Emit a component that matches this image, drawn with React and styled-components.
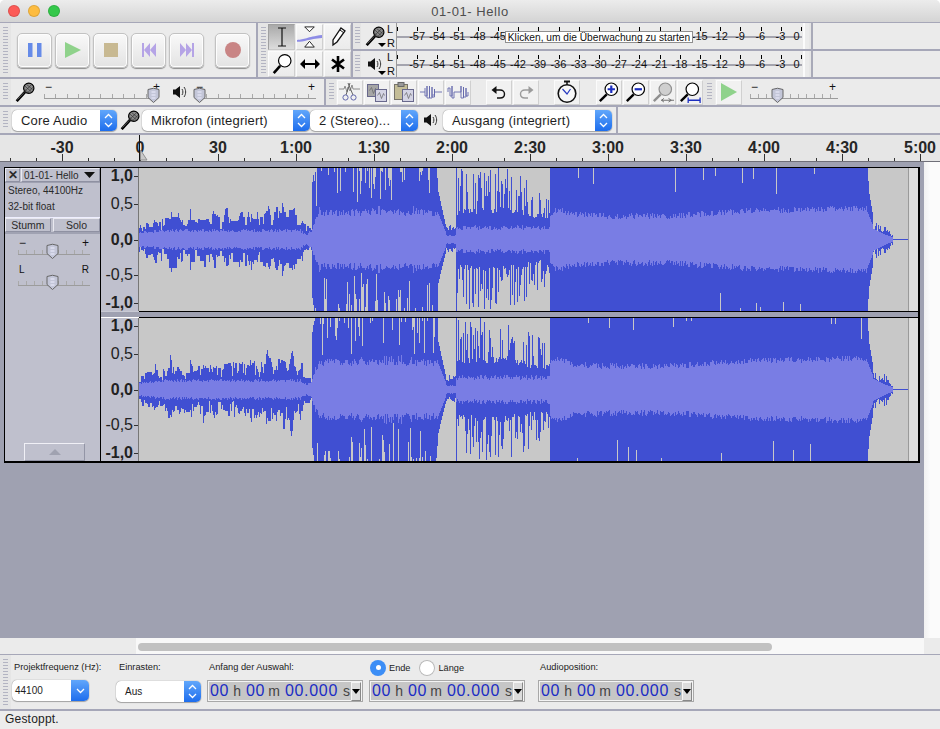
import React from 'react';
import styled, { createGlobalStyle } from 'styled-components';

const GlobalStyle = createGlobalStyle`
  html, body { margin: 0; padding: 0; background: #fff; }
  * { box-sizing: border-box; }
`;

const LINE = '#a6a7b8';
const SANS = '"Liberation Sans", Arial, sans-serif';

const Window = styled.div`
  width: 940px;
  height: 729px;
  display: flex;
  flex-direction: column;
  overflow: hidden;
  background: #ececec;
  font-family: ${SANS};
  color: #222;
  border-radius: 5px 5px 0 0;
`;

const TitleBar = styled.div`
  height: 23px;
  flex: none;
  display: flex;
  align-items: center;
  padding-left: 8px;
  gap: 8px;
  position: relative;
  background: linear-gradient(#ececec, #d4d4d4);
  border-bottom: 1px solid ${LINE};
`;

const Light = styled.span`
  width: 12px;
  height: 12px;
  border-radius: 50%;
  background: ${p => p.$color};
  box-shadow: inset 0 0 0 1px rgba(0, 0, 0, 0.12);
`;

const Title = styled.div`
  position: absolute;
  left: 0;
  right: 0;
  text-align: center;
  font-size: 13px;
  letter-spacing: 0.55px;
  color: #4e4e4e;
`;

const Row = styled.div`
  height: ${p => p.$h}px;
  flex: none;
  display: flex;
  background: #ebebeb;
  border-bottom: 2px solid ${LINE};
`;

const Bar = styled.div`
  width: ${p => p.$w}px;
  flex: none;
  display: flex;
  align-items: ${p => p.$align || 'center'};
  border-right: ${p => (p.$end ? `2px solid ${LINE}` : '0')};
`;

const GripStrip = styled.div`
  width: ${p => p.$w || 11}px;
  flex: none;
  align-self: stretch;
  display: flex;
  justify-content: center;
  align-items: center;
  background: #e5e5e5;
`;

const Grip = styled.div`
  width: 5px;
  height: calc(100% - 8px);
  background: repeating-linear-gradient(180deg, #b3b4c2 0 1px, transparent 1px 3px);
`;

const Transport = styled.button`
  width: 35px;
  height: 35px;
  padding: 0;
  margin-left: ${p => p.$gap}px;
  display: flex;
  align-items: center;
  justify-content: center;
  border: 1px solid #c2c2c2;
  border-radius: 5px;
  background: linear-gradient(#f9f9f9, #e3e3e3);
  box-shadow: 0 1px 1px #8d8d8d, inset 0 0 0 1px #fdfdfd;
`;

const ToolGrid = styled.div`
  display: grid;
  grid-template-columns: repeat(3, 27px);
  grid-auto-rows: 26px;
  gap: 1px;
  margin-top: 1px;
`;

const ToolButton = styled.div`
  display: flex;
  align-items: center;
  justify-content: center;
  border: 1px solid;
  border-color: ${p => (p.$on ? '#a0a0a0 #c8c8c8 #c8c8c8 #a0a0a0' : '#fbfbfb #cfcfcf #cfcfcf #fbfbfb')};
  background: ${p => (p.$on ? 'linear-gradient(#a9a9a9, #dcdcdc)' : 'linear-gradient(#f6f6f6, #ebebeb)')};
`;

const Meters = styled.div`
  flex: 1;
  display: flex;
  flex-direction: column;
`;

const MeterRow = styled.div`
  height: ${p => p.$h}px;
  display: flex;
  border-bottom: ${p => (p.$rule ? `2px solid ${LINE}` : '0')};
`;

const MeterIcon = styled.div`
  width: 20px;
  margin-left: 4px;
  position: relative;
  display: flex;
  align-items: center;
  justify-content: center;
`;

const DownMark = styled.span`
  position: absolute;
  right: -1px;
  bottom: 2px;
  border: 4px solid transparent;
  border-top: 4px solid #000;
  border-bottom: 0;
`;

const Channels = styled.div`
  width: 8px;
  margin: -1px 0 0 2px;
  font-size: 11px;
  line-height: 14px;
  color: #111;
`;

const Scale = styled.div`
  width: 406px;
  margin-left: 1px;
  position: relative;
  border-left: 1px solid #9a9a9a;
`;

const ScaleTicks = styled.div`
  height: 4px;
  margin-top: 4px;
  background: repeating-linear-gradient(90deg, #000 0 1px, transparent 1px 20.2px);
`;

const ScaleRule = styled.div`
  position: absolute;
  left: 0;
  right: 0;
  top: ${p => p.$top}px;
  height: 2px;
  background: #a4a4ae;
`;

const ScaleLabels = styled.div`
  display: flex;
  position: relative;
  padding-left: 10px;
  margin-top: -1px;
`;

const ScaleLabel = styled.span`
  width: ${p => (p.$last ? 12 : 20.2)}px;
  flex: none;
  text-align: center;
  font-size: 11px;
  line-height: 13px;
  color: #111;
  visibility: ${p => (p.$covered ? 'hidden' : 'visible')};
`;

const MeterHint = styled.div`
  position: absolute;
  left: 108px;
  top: 8px;
  width: 188px;
  height: 12px;
  display: flex;
  align-items: center;
  justify-content: center;
  background: #fff;
  border: 1px solid #8f8f8f;
  font-size: 10.2px;
  color: #111;
  white-space: nowrap;
`;

const ScaleEnd = styled.div`
  width: 10px;
  margin-left: 1px;
  border-left: 2px solid #fbfbfb;
  border-right: 2px solid #a9aab8;
  box-shadow: inset -2px 0 0 #e6e6e6;
`;

const SliderBox = styled.div`
  width: ${p => p.$w}px;
  height: 26px;
  flex: none;
  position: relative;
  margin-left: ${p => p.$gap || 0}px;
  padding-top: 15px;
`;

const SliderTicks = styled.div`
  height: 5px;
  border-bottom: 1px solid #9c9c9c;
  background: repeating-linear-gradient(90deg, #a9a9a9 0 1px, transparent 1px ${p => p.$step || 11.3}px);
`;

const Sign = styled.span`
  position: absolute;
  top: ${p => p.$top ?? 2}px;
  ${p => (p.$right ? `right: ${p.$inset ?? 1}px;` : 'left: 1px;')}
  font-size: ${p => p.$size || 12}px;
  line-height: 12px;
  color: #111;
`;

const ThumbWrap = styled.span`
  position: absolute;
  top: 8px;
  left: ${p => p.$at}px;
  line-height: 0;
`;

const EditButton = styled.div`
  width: 26px;
  height: 25px;
  flex: none;
  margin-left: ${p => p.$gap ?? 1}px;
  display: flex;
  align-items: center;
  justify-content: center;
  border: 1px solid;
  border-color: #fbfbfb #d0d0d0 #d0d0d0 #fbfbfb;
  background: #f1f1f1;
`;

const Select = styled.div`
  width: ${p => p.$w}px;
  height: ${p => p.$h || 21}px;
  flex: none;
  display: flex;
  align-items: center;
  margin-left: ${p => p.$gap || 0}px;
  background: #fff;
  border-radius: 5px;
  box-shadow: 0 0 1px #666, 0 1px 1px #aaa;
  font-size: ${p => p.$size || 13}px;
  letter-spacing: ${p => (p.$size ? 0 : 0.2)}px;
  color: #1e1e1e;
`;

const SelectText = styled.span`
  flex: 1;
  padding-left: ${p => p.$pad || 9}px;
  white-space: nowrap;
  overflow: hidden;
`;

const Stepper = styled.span`
  width: ${p => p.$w || 17}px;
  align-self: stretch;
  flex: none;
  display: flex;
  align-items: center;
  justify-content: center;
  border-radius: 0 5px 5px 0;
  background: linear-gradient(#61a7fb, #1d6ded);
`;

const IconSlot = styled.span`
  width: ${p => p.$w}px;
  flex: none;
  margin-left: ${p => p.$gap || 0}px;
  display: flex;
  align-items: center;
  justify-content: center;
`;

const Timeline = styled.div`
  height: 27px;
  flex: none;
  position: relative;
  display: flex;
  flex-direction: column;
  background: #e6e6e6;
  border-bottom: 1px solid #6f6f78;
`;

const TimeLabels = styled.div`
  height: 26px;
  display: flex;
  padding-left: 23px;
  overflow: hidden;
`;

const TimeLabel = styled.span`
  width: 78px;
  flex: none;
  text-align: center;
  font-size: 16px;
  font-weight: 700;
  line-height: 26px;
  color: #262626;
`;

const TimeTicks = styled.div`
  position: absolute;
  left: 0;
  right: 0;
  bottom: 0;
  height: 7px;
  background-image: linear-gradient(90deg, #333 1px, transparent 1px),
    linear-gradient(90deg, #333 1px, transparent 1px);
  background-size: 78px 7px, 26px 3px;
  background-position: 62px 100%, 10px 100%;
  background-repeat: repeat-x;
`;

const Playhead = styled.span`
  position: absolute;
  left: 139px;
  top: 0;
  bottom: 0;
  width: 1px;
  background: #111;
`;

const PlayMark = styled.span`
  position: absolute;
  left: 140px;
  top: 14px;
  line-height: 0;
`;

const Main = styled.div`
  height: 476px;
  flex: none;
  display: flex;
`;

const TrackArea = styled.div`
  width: 924px;
  flex: none;
  padding: 5px 0 0 4px;
  background: #9fa1b1;
`;

const VScroll = styled.div`
  flex: 1;
  background: linear-gradient(90deg, #f1f1f1, #fbfbfb 40%);
`;

const Track = styled.div`
  width: 916px;
  height: 296px;
  display: flex;
  background: #000;
  padding: 1px 2px 2px 1px;
`;

const Control = styled.div`
  width: 95px;
  flex: none;
  display: flex;
  flex-direction: column;
  background: #bfc0cd;
  font-size: 10px;
  color: #2a2a2a;
`;

const Header = styled.div`
  height: 15px;
  display: flex;
  border-bottom: 1px solid #9fa1b1;
`;

const PanelButton = styled.div`
  display: flex;
  align-items: center;
  justify-content: ${p => p.$justify || 'center'};
  width: ${p => p.$w}px;
  margin-left: ${p => p.$gap || 0}px;
  padding: ${p => p.$pad || 0};
  flex: ${p => (p.$w ? 'none' : 1)};
  border: 1px solid;
  border-color: #e9e9f0 #8f91a2 #8f91a2 #e9e9f0;
  font-size: ${p => p.$size || 10}px;
  font-weight: ${p => p.$weight || 400};
  color: #2a2a2a;
`;

const Info = styled.div`
  height: 34px;
  padding: 0 0 0 3px;
  line-height: 16px;
  white-space: nowrap;
`;

const MuteRow = styled.div`
  height: 17px;
  display: flex;
  gap: 2px;
  border-top: 1px solid #eef;
  border-bottom: 2px solid #a0a2b2;
`;

const PanelSlider = styled.div`
  padding-left: 13px;
  margin-top: ${p => p.$top}px;
`;

const Collapse = styled.div`
  width: 61px;
  height: 18px;
  margin: auto 0 0 19px;
  display: flex;
  align-items: center;
  justify-content: center;
  border: 1px solid;
  border-color: #f0f0f6 #9395a6 #9395a6 #f0f0f6;
`;

const CollapseMark = styled.span`
  border: 6px solid transparent;
  border-bottom: 6px solid #a0a2b0;
  border-top: 0;
`;

const ChannelStack = styled.div`
  flex: 1;
  display: flex;
  flex-direction: column;
  margin-left: 1px;
`;

const Channel = styled.div`
  height: 143px;
  display: flex;
`;

const AmpRuler = styled.div`
  width: 38px;
  flex: none;
  display: grid;
  grid-template-rows: 16px 40px 32px 38px 17px;
  background: #bfc0cd;
  border-right: 1px solid #777;
`;

const AmpLabel = styled.div`
  position: relative;
  display: flex;
  align-items: center;
  justify-content: flex-end;
  padding-right: 5px;
  font-size: 16px;
  font-weight: ${p => (p.$bold ? 700 : 400)};
  color: #222;
  &::after {
    content: '';
    position: absolute;
    right: 0;
    top: 50%;
    width: 4px;
    height: 1px;
    background: #333;
  }
`;

const Divider = styled.div`
  height: 7px;
  display: flex;
`;

const DividerSide = styled.div`
  width: 38px;
  background: #9fa1b1;
  border-top: 1px solid #c9cad4;
  border-bottom: 1px solid #fff;
`;

const DividerWave = styled.div`
  flex: 1;
  background: #9fa1b1;
  border-top: 1px solid #000;
  border-bottom: 1px solid #000;
`;

const HScroll = styled.div`
  height: 17px;
  flex: none;
  padding-left: 136px;
  background: #ebebeb;
  border-bottom: 1px solid ${LINE};
`;

const HTrack = styled.div`
  width: 788px;
  height: 16px;
  padding: 5px 2px 0;
  background: #f8f8f8;
`;

const HThumb = styled.div`
  width: 634px;
  height: 8px;
  border-radius: 4px;
  background: #c1c1c1;
`;

const SelectionBar = styled.div`
  height: 56px;
  flex: none;
  display: flex;
  background: #ebebeb;
  border-bottom: 2px solid ${LINE};
`;

const Field = styled.div`
  width: ${p => p.$w}px;
  flex: none;
  margin-left: ${p => p.$gap}px;
  padding-top: 6px;
`;

const FieldLabel = styled.div`
  height: 13px;
  margin-bottom: ${p => p.$below ?? 6}px;
  padding-left: ${p => p.$pad || 2}px;
  font-size: 9.25px;
  line-height: 13px;
  color: #222;
  white-space: nowrap;
`;

const RadioRow = styled.div`
  height: 13px;
  margin-bottom: 6px;
  display: flex;
  align-items: center;
  font-size: 9.2px;
  color: #222;
`;

const Radio = styled.span`
  width: 16px;
  height: 16px;
  flex: none;
  display: flex;
  align-items: center;
  justify-content: center;
  border-radius: 50%;
  margin: 0 3px 0 ${p => p.$gap}px;
  background: ${p => (p.$on ? '#3c8ef6' : '#fff')};
  box-shadow: ${p => (p.$on ? 'none' : 'inset 0 0 0 1px #b8b8b8')};
  &::after {
    content: '';
    width: 5px;
    height: 5px;
    border-radius: 50%;
    background: ${p => (p.$on ? '#fff' : 'transparent')};
  }
`;

const TimeBox = styled.div`
  width: 156px;
  height: 22px;
  display: flex;
  align-items: center;
  padding-left: 2px;
  background: #c6c6c6;
  border: 1px solid #a8a8a8;
  box-shadow: 0 0 0 1px #f4f4f4 inset;
  white-space: nowrap;
`;

const Digits = styled.span`
  font-size: 16px;
  letter-spacing: 0.7px;
  color: #1b2cc4;
  margin-left: ${p => p.$gap || 0}px;
`;

const Unit = styled.span`
  font-size: 14px;
  color: #444;
  margin-left: ${p => p.$gap}px;
`;

const TimeMenu = styled.span`
  width: 10px;
  height: 19px;
  margin-left: auto;
  margin-right: 1px;
  flex: none;
  display: flex;
  align-items: center;
  justify-content: center;
  background: #dcdcdc;
  border: 1px solid;
  border-color: #f5f5f5 #888 #888 #f5f5f5;
  &::after {
    content: '';
    border: 4px solid transparent;
    border-top: 5px solid #000;
    border-bottom: 0;
  }
`;

const Status = styled.div`
  flex: 1;
  padding-left: 5px;
  font-size: 12px;
  line-height: 16px;
  letter-spacing: 0.2px;
  color: #222;
`;

const Mic = ({ size = 20 }) => (
  <svg width={size} height={size} viewBox="0 0 24 24">
    <line x1="2" y1="23" x2="12" y2="12" stroke="#000" strokeWidth="3.2" />
    <line x1="3" y1="21" x2="11" y2="12.5" stroke="#999" strokeWidth="0.7" />
    <circle cx="16.5" cy="7.5" r="6.2" fill="#8b8b8b" stroke="#000" strokeWidth="1.4" />
    <path d="M12 5l8 7M14 3l7 6M11 8l6 6M20 3l-8 8M22 6l-7 7" stroke="#222" strokeWidth="0.7" />
  </svg>
);

const Speaker = () => (
  <svg width="14" height="16" viewBox="0 0 14 16">
    <path d="M0 5.5h2.5L7 2v12L2.5 10.5H0z" fill="#111" />
    <path d="M9 5c1.2 1.8 1.2 4.2 0 6M11 3c2.2 3 2.2 7 0 10" fill="none" stroke="#333" strokeWidth="1" />
  </svg>
);

const Thumb = () => (
  <svg width="13" height="16" viewBox="0 0 13 16">
    <path d="M1 2.5Q6.5 0 12 2.5V10.5L6.5 15.5L1 10.5Z" fill="#c3c6d8" stroke="#666" />
    <path d="M4.5 5h4M4.5 8h4M4.5 11h4" stroke="#eef" />
  </svg>
);

const Magnifier = ({ tone = '#000', children }) => (
  <svg width="22" height="22" viewBox="0 0 24 24">
    <line x1="2" y1="22" x2="9.5" y2="14.5" stroke={tone} strokeWidth="2.6" />
    <circle cx="14.5" cy="9" r="6.8" fill={tone === '#000' ? '#fff' : '#cfcfcf'} stroke={tone} strokeWidth="1.3" />
    {children}
  </svg>
);

const Wavelet = ({ d }) => (
  <svg width="22" height="18" viewBox="0 0 22 18">
    <path d={d} fill="none" stroke="#6469ad" strokeWidth="0.9" />
  </svg>
);

const Doc = ({ x, y, fill }) => (
  <g>
    <rect x={x} y={y} width="11" height="12" fill={fill} stroke="#68688c" />
    <path d={`M${x + 2} ${y + 6}l2-3 2 6 2-5 1 2`} fill="none" stroke="#666" strokeWidth="0.7" />
  </g>
);

const icons = {
  cut: (
    <svg width="22" height="20" viewBox="0 0 22 20">
      <path d="M0 7h5l1-3 2 6 1-5 2 4 2-6 1 4h7" fill="none" stroke="#8c8c8c" />
      <path d="M11 1L7 13M9 1l5 12" stroke="#666" />
      <circle cx="6.5" cy="15.5" r="2.6" fill="none" stroke="#6469ad" />
      <circle cx="14.5" cy="15.5" r="2.6" fill="none" stroke="#6469ad" />
    </svg>
  ),
  copy: (
    <svg width="22" height="20" viewBox="0 0 22 20">
      <Doc x={1.5} y={2.5} fill="#a5a5a5" />
      <Doc x={9.5} y={7.5} fill="#d4d4e4" />
    </svg>
  ),
  paste: (
    <svg width="22" height="20" viewBox="0 0 22 20">
      <rect x="1.5" y="2.5" width="13" height="15" fill="#c4bd97" stroke="#77736a" />
      <rect x="5" y="0.5" width="6" height="4" fill="#999" stroke="#666" />
      <Doc x={9.5} y={7.5} fill="#d4d4e4" />
    </svg>
  ),
  trim: <Wavelet d="M0 9h5M5 5v8h2V3v12h2.500V3v12H12V4v10h2.500V6v6h-2M14.500 9H22" />,
  silence: <Wavelet d="M1 9V5h2v8h2V3v12h2V9h7V3v12h2.500V4v10H19V5v8h2V9" />,
  undo: (
    <svg width="18" height="16" viewBox="0 0 18 16">
      <path d="M3 6h7c6 0 6 8 0 8H7" fill="none" stroke="#111" strokeWidth="1.4" />
      <path d="M6.5 2L1.500 6l5 4z" fill="#111" />
    </svg>
  ),
  redo: (
    <svg width="18" height="16" viewBox="0 0 18 16">
      <path d="M15 6H8c-6 0-6 8 0 8h3" fill="none" stroke="#9b9b9b" strokeWidth="1.4" />
      <path d="M11.500 2l5 4-5 4z" fill="#9b9b9b" />
    </svg>
  ),
  timer: (
    <svg width="22" height="24" viewBox="0 0 22 24">
      <rect x="8" y="0.5" width="6" height="2" fill="#111" />
      <line x1="11" y1="2" x2="11" y2="5" stroke="#111" strokeWidth="1.5" />
      <circle cx="11" cy="13.5" r="8.8" fill="#f7f7f7" stroke="#111" strokeWidth="1.6" />
      <path d="M6.500 9l4.500 5 3.500-5" fill="none" stroke="#2a3cc0" strokeWidth="1.2" />
    </svg>
  ),
  zoomIn: (
    <Magnifier>
      <path d="M10.500 9h8M14.500 5v8" stroke="#1c2ec0" strokeWidth="2.4" />
    </Magnifier>
  ),
  zoomOut: (
    <Magnifier>
      <path d="M10.500 9h8" stroke="#1c2ec0" strokeWidth="2.4" />
    </Magnifier>
  ),
  fitSel: (
    <Magnifier tone="#8f8f8f">
      <path d="M10 21h14M13 19l-2.500 2 2.500 2M18 19l3 2-3 2" fill="none" stroke="#666" strokeWidth="1" />
    </Magnifier>
  ),
  fitAll: (
    <Magnifier>
      <path d="M10 21h13M10 18v6M23 18v6" fill="none" stroke="#1c2ec0" strokeWidth="1.4" />
    </Magnifier>
  ),
};

const tools = [
  <svg key="i" width="14" height="20" viewBox="0 0 14 20">
    <path d="M3 1h8M3 19h8M7 1v18" stroke="#111" strokeWidth="1.2" />
  </svg>,
  <svg key="e" width="26" height="24" viewBox="0 0 26 24">
    <path d="M8 1.500h10l-5 5zM8 22.500h10l-5-6z" fill="#fff" stroke="#222" />
    <path d="M0 15c8 0 10-3 26-5v3c-14 1-18 4-26 4z" fill="#8d8ce6" />
  </svg>,
  <svg key="d" width="20" height="22" viewBox="0 0 20 22">
    <path d="M13 2l4 3-8 11-4 3 0-5z" fill="#fff" stroke="#111" strokeWidth="1.3" />
    <path d="M12 4l4 3" stroke="#111" />
  </svg>,
  <svg key="z" width="22" height="22" viewBox="0 0 24 24">
    <line x1="3" y1="22" x2="10" y2="14" stroke="#000" strokeWidth="2.8" />
    <circle cx="15" cy="8.500" r="6.800" fill="#fff" stroke="#000" strokeWidth="1.3" />
  </svg>,
  <svg key="s" width="20" height="10" viewBox="0 0 20 10">
    <path d="M4 5h12" stroke="#000" strokeWidth="2" />
    <path d="M5 0L0 5l5 5zM15 0l5 5-5 5z" fill="#000" />
  </svg>,
  <svg key="m" width="18" height="20" viewBox="0 0 18 20">
    <path d="M9 2v16M3 5.500l12 9M15 5.500l-12 9" stroke="#000" strokeWidth="2.6" />
  </svg>,
];

const transportIcons = [
  <svg key="p" width="14" height="14" viewBox="0 0 14 14">
    <path d="M0 0h4.500v14H0zM9 0h4.500v14H9z" fill="#668be8" />
  </svg>,
  <svg key="g" width="16" height="16" viewBox="0 0 16 16">
    <path d="M0 0l16 8-16 8z" fill="#8fd28b" />
  </svg>,
  <svg key="t" width="14" height="14" viewBox="0 0 14 14">
    <rect width="14" height="14" fill="#c8b992" />
  </svg>,
  <svg key="b" width="14" height="14" viewBox="0 0 14 14">
    <path d="M0 0h2v14H0zM8 0v14L2 7zM14 0v14L8 7z" fill="#b5a4e6" />
  </svg>,
  <svg key="f" width="14" height="14" viewBox="0 0 14 14">
    <path d="M14 0h-2v14h2zM6 0v14l6-7zM0 0v14l6-7z" fill="#b5a4e6" />
  </svg>,
  <svg key="r" width="16" height="16" viewBox="0 0 16 16">
    <circle cx="8" cy="8" r="8" fill="#c98585" />
  </svg>,
];

const Chevrons = () => (
  <svg width="9" height="15" viewBox="0 0 9 15">
    <path d="M1 5l3.500-3.500L8 5M1 10l3.500 3.500L8 10" fill="none" stroke="#fff" strokeWidth="1.300" />
  </svg>
);

const ChevronDown = () => (
  <svg width="9" height="6" viewBox="0 0 9 6">
    <path d="M1 1l3.500 3.500L8 1" fill="none" stroke="#fff" strokeWidth="1.300" />
  </svg>
);

const Slider = ({ w, at, gap, minus = '−', plus = '+', step, signTop, signSize, inset }) => (
  <SliderBox $w={w} $gap={gap}>
    <Sign $top={signTop} $size={signSize}>{minus}</Sign>
    <Sign $right $top={signTop} $size={signSize} $inset={inset}>{plus}</Sign>
    <SliderTicks $step={step} />
    <ThumbWrap $at={at}>
      <Thumb />
    </ThumbWrap>
  </SliderBox>
);

const scale = [57, 54, 51, 48, 45, 42, 39, 36, 33, 30, 27, 24, 21, 18, 15, 12, 9, 6, 3];

const Meter = ({ icon, h, rule, ruleTop, hint }) => (
  <MeterRow $h={h} $rule={rule}>
    <GripStrip $w={8}>
      <Grip />
    </GripStrip>
    <MeterIcon>
      {icon}
      <DownMark />
    </MeterIcon>
    <Channels>
      L
      <br />
      R
    </Channels>
    <Scale>
      <ScaleTicks />
      <ScaleRule $top={ruleTop} />
      <ScaleLabels>
        {scale.map(n => (
          <ScaleLabel key={n} $covered={hint && n <= 42 && n >= 18}>-{n}</ScaleLabel>
        ))}
        <ScaleLabel $last>0</ScaleLabel>
      </ScaleLabels>
      {hint && <MeterHint>{hint}</MeterHint>}
    </Scale>
    <ScaleEnd />
  </MeterRow>
);

const random = seed => () => {
  seed = (seed + 0x6d2b79f5) | 0;
  let t = Math.imul(seed ^ (seed >>> 15), 1 | seed);
  t = (t + Math.imul(t ^ (t >>> 7), 61 | t)) ^ t;
  return ((t ^ (t >>> 14)) >>> 0) / 4294967296;
};

const lerp = (table, x) => {
  for (let i = 1; i < table.length; i++) {
    if (x <= table[i][0]) {
      const [x0, y0] = table[i - 1];
      const [x1, y1] = table[i];
      return y0 + ((y1 - y0) * (x - x0)) / (x1 - x0);
    }
  }
  return table[table.length - 1][1];
};

const quietPeaks = [
  [147, 22], [155, 26], [170, 36], [178, 28], [190, 30], [203, 36], [214, 32], [226, 34],
  [240, 30], [251, 33], [267, 40], [276, 33], [283, 42], [291, 48], [300, 30],
];

const quietAmp = (x, r) => {
  let a = lerp([[139, 12], [170, 17], [200, 19], [290, 23], [304, 10], [311, 11]], x) * (0.55 + r() * 0.8);
  quietPeaks.forEach(([px, h]) => {
    const d = Math.abs(x - px);
    if (d < 8) a = Math.max(a, h * (1 - d / 8) * (0.6 + r() * 0.45));
  });
  return a;
};

const gapped = (r, chance, most) => {
  if (r() > chance) return 72;
  const q = r();
  return 72 - (3 + q * q * most);
};

// one amplitude column of the take, x in page pixels
const column = (x, r) => {
  const n = r() - 0.5;
  if (x < 312) return [quietAmp(x, r), quietAmp(x, r), lerp([[139, 7], [170, 9], [300, 9], [306, 5], [312, 9]], x) + n * 3];
  if (x < 314) return [58 + (x - 312) * 7, 58 + (x - 312) * 7, 11 + (x - 312) * 4];
  if (x < 438) {
    return [gapped(r, 0.27, 36), gapped(r, 0.27, 36), lerp([[314, 18], [320, 27], [438, 27]], x) + n * 7 + (r() > 0.9 ? 4 : 0)];
  }
  if (x < 446) {
    const a = lerp([[438, 48], [441, 34], [446, 11]], x);
    return [a, a * 0.9, lerp([[438, 26], [446, 6]], x)];
  }
  if (x < 456) return [8 + r() * 7, 7 + r() * 6, 4 + n];
  if (x === 456) return [72, 72, 12];
  if (x < 550) {
    const floor = lerp([[456, 24], [500, 27], [545, 19], [550, 24]], x);
    const top = lerp([[456, 72], [505, 72], [525, 62], [550, 44]], x);
    const pick = () => (r() < 0.42 ? floor + r() * 6 : floor + Math.pow(r(), 0.75) * (top - floor));
    return [pick(), pick(), 12 + n * 5];
  }
  if (x < 867) {
    const rms = lerp([[550, 26], [558, 30], [575, 25], [620, 23], [680, 24], [750, 29], [867, 31]], x);
    return [gapped(r, 0.035, 24), gapped(r, 0.035, 24), rms + n * 6];
  }
  if (x < 873) {
    const a = lerp([[867, 72], [869, 46], [873, 22]], x);
    return [a, a, lerp([[867, 28], [873, 13]], x)];
  }
  if (x < 893) {
    const a = lerp([[873, 13], [885, 12], [893, 3]], x) * (0.6 + r() * 0.7);
    return [a, a * 1.1, lerp([[873, 11], [885, 5], [893, 2]], x)];
  }
  if (x < 908) return [0.6, 0.6, 0];
  return [0, 0, 0];
};

const WAVE_LEFT = 139;
const WAVE_W = 779;
const WAVE_H = 143;

// the quiet part holds a column for a pixel now and then, as the reference does
const isBlocky = x => x < 312;

const buildWave = seed => {
  const r = random(seed);
  const mid = WAVE_H / 2;
  let dark = '';
  let light = '';
  let prev = null;
  for (let i = 0; i < WAVE_W; i++) {
    const x = WAVE_LEFT + i;
    const col = column(x, r);
    const held = prev && isBlocky(x) && r() < 0.3;
    const [up, down] = held ? prev : col;
    const rms = col[2];
    if (!held) prev = col;
    if (up <= 0) continue;
    dark += `M${i + 0.5} ${(mid - up).toFixed(1)}V${(mid + down).toFixed(1)}`;
    if (rms > 0) light += `M${i + 0.5} ${(mid - rms).toFixed(1)}V${(mid + rms).toFixed(1)}`;
  }
  return { dark, light };
};

const waves = [buildWave(11), buildWave(29)];

const Wave = ({ data }) => (
  <svg width={WAVE_W} height={WAVE_H} viewBox={`0 0 ${WAVE_W} ${WAVE_H}`} shapeRendering="crispEdges" style={{ display: 'block' }}>
    <rect width={WAVE_W} height={WAVE_H} fill="#c8c8c8" />
    <rect x="769" width="10" height={WAVE_H} fill="#dcdcdc" />
    <rect x="769" width="1" height={WAVE_H} fill="#9a9a9a" />
    <path d={data.dark} stroke="#404fd2" strokeWidth="1" fill="none" />
    <path d={data.light} stroke="#797de4" strokeWidth="1" fill="none" />
  </svg>
);

const ampRows = [
  ['1,0', true],
  ['0,5', false],
  ['0,0', true],
  ['-0,5', false],
  ['-1,0', true],
];

const ChannelView = ({ data }) => (
  <Channel>
    <AmpRuler>
      {ampRows.map(([text, bold]) => (
        <AmpLabel key={text} $bold={bold}>
          {text}
        </AmpLabel>
      ))}
    </AmpRuler>
    <Wave data={data} />
  </Channel>
);

const TimeCode = () => (
  <TimeBox>
    <Digits>00</Digits>
    <Unit $gap={4}>h</Unit>
    <Digits $gap={5}>00</Digits>
    <Unit $gap={3}>m</Unit>
    <Digits $gap={5}>00.000</Digits>
    <Unit $gap={5}>s</Unit>
    <TimeMenu />
  </TimeBox>
);

const times = ['-30', '0', '30', '1:00', '1:30', '2:00', '2:30', '3:00', '3:30', '4:00', '4:30', '5:00'];

export default function App() {
  return (
    <Window>
      <GlobalStyle />
      <TitleBar>
        <Light $color="#fc5b57" />
        <Light $color="#fdbc40" />
        <Light $color="#34c84a" />
        <Title>01-01- Hello</Title>
      </TitleBar>

      <Row $h={56}>
        <Bar $w={258} $end>
          <GripStrip>
            <Grip />
          </GripStrip>
          {transportIcons.map((icon, i) => (
            <Transport key={i} $gap={i === 0 ? 6 : i === 5 ? 11 : 3}>
              {icon}
            </Transport>
          ))}
        </Bar>
        <Bar $w={95} $end $align="flex-start">
          <GripStrip $w={10}>
            <Grip />
          </GripStrip>
          <ToolGrid>
            {tools.map((icon, i) => (
              <ToolButton key={i} $on={i === 0}>
                {icon}
              </ToolButton>
            ))}
          </ToolGrid>
        </Bar>
        <Meters>
          <Meter icon={<Mic />} h={28} rule ruleTop={13} hint="Klicken, um die Überwachung zu starten" />
          <Meter icon={<Speaker />} h={26} ruleTop={13} />
        </Meters>
      </Row>

      <Row $h={28}>
        <Bar $w={326} $end>
          <GripStrip>
            <Grip />
          </GripStrip>
          <IconSlot $w={20} $gap={4}>
            <Mic />
          </IconSlot>
          <Slider w={114} gap={9} at={103} inset={-2} />
          <IconSlot $w={14} $gap={15}>
            <Speaker />
          </IconSlot>
          <Slider w={121} gap={8} at={-2} />
        </Bar>
        <Bar $w={614}>
          <GripStrip $w={10}>
            <Grip />
          </GripStrip>
          <EditButton $gap={1}>{icons.cut}</EditButton>
          <EditButton>{icons.copy}</EditButton>
          <EditButton>{icons.paste}</EditButton>
          <EditButton>{icons.trim}</EditButton>
          <EditButton>{icons.silence}</EditButton>
          <EditButton $gap={15}>{icons.undo}</EditButton>
          <EditButton>{icons.redo}</EditButton>
          <EditButton $gap={15}>{icons.timer}</EditButton>
          <EditButton $gap={16}>{icons.zoomIn}</EditButton>
          <EditButton>{icons.zoomOut}</EditButton>
          <EditButton>{icons.fitSel}</EditButton>
          <EditButton>{icons.fitAll}</EditButton>
          <GripStrip $w={12}>
            <Grip />
          </GripStrip>
          <EditButton $gap={1}>
            <svg width="18" height="18" viewBox="0 0 18 18">
              <path d="M1 0l16 9-16 9z" fill="#8fd28b" />
            </svg>
          </EditButton>
          <Slider w={88} gap={8} at={21} step={8} inset={2} />
        </Bar>
      </Row>

      <Row $h={28}>
        <Bar $w={618} $end>
          <GripStrip>
            <Grip />
          </GripStrip>
          <Select $w={105} $gap={1}>
            <SelectText>Core Audio</SelectText>
            <Stepper>
              <Chevrons />
            </Stepper>
          </Select>
          <IconSlot $w={20} $gap={3}>
            <Mic />
          </IconSlot>
          <Select $w={168} $gap={2}>
            <SelectText>Mikrofon (integriert)</SelectText>
            <Stepper>
              <Chevrons />
            </Stepper>
          </Select>
          <Select $w={108}>
            <SelectText>2 (Stereo)...</SelectText>
            <Stepper>
              <Chevrons />
            </Stepper>
          </Select>
          <IconSlot $w={14} $gap={6}>
            <Speaker />
          </IconSlot>
          <Select $w={169} $gap={5}>
            <SelectText>Ausgang (integriert)</SelectText>
            <Stepper>
              <Chevrons />
            </Stepper>
          </Select>
        </Bar>
      </Row>

      <Timeline>
        <TimeLabels>
          {times.map(t => (
            <TimeLabel key={t}>{t}</TimeLabel>
          ))}
        </TimeLabels>
        <TimeTicks />
        <Playhead />
        <PlayMark>
          <svg width="8" height="12" viewBox="0 0 8 12">
            <path d="M0.500 1L7 11H0.500z" fill="#c9c9c9" stroke="#8f8f8f" />
          </svg>
        </PlayMark>
      </Timeline>

      <Main>
        <TrackArea>
          <Track>
            <Control>
              <Header>
                <PanelButton $w={15} $size={12} $weight={700}>✕</PanelButton>
                <PanelButton $gap={1} $justify="space-between" $pad="0 4px 0 2px">
                  01-01- Hello
                  <svg width="11" height="6" viewBox="0 0 11 6">
                    <path d="M0 0h11L5.500 6z" fill="#111" />
                  </svg>
                </PanelButton>
              </Header>
              <Info>
                Stereo, 44100Hz
                <br />
                32-bit float
              </Info>
              <MuteRow>
                <PanelButton $w={46} $size={10.500}>Stumm</PanelButton>
                <PanelButton $size={10.500}>Solo</PanelButton>
              </MuteRow>
              <PanelSlider $top={1}>
                <Slider w={72} at={28} step={8} />
              </PanelSlider>
              <PanelSlider $top={5}>
                <Slider w={72} at={28} step={8} minus="L" plus="R" signTop={-2} signSize={10} />
              </PanelSlider>
              <Collapse>
                <CollapseMark />
              </Collapse>
            </Control>
            <ChannelStack>
              <ChannelView data={waves[0]} />
              <Divider>
                <DividerSide />
                <DividerWave />
              </Divider>
              <ChannelView data={waves[1]} />
            </ChannelStack>
          </Track>
        </TrackArea>
        <VScroll />
      </Main>

      <HScroll>
        <HTrack>
          <HThumb />
        </HTrack>
      </HScroll>

      <SelectionBar>
        <GripStrip>
          <Grip />
        </GripStrip>
        <Field $w={77} $gap={1}>
          <FieldLabel>Projektfrequenz (Hz):</FieldLabel>
          <Select $w={77} $h={21} $size={10}>
            <SelectText $pad={3}>44100</SelectText>
            <Stepper $w={18}>
              <ChevronDown />
            </Stepper>
          </Select>
        </Field>
        <Field $w={85} $gap={27}>
          <FieldLabel $pad={3} $below={7}>Einrasten:</FieldLabel>
          <Select $w={85} $h={21} $size={10}>
            <SelectText $pad={9}>Aus</SelectText>
            <Stepper>
              <Chevrons />
            </Stepper>
          </Select>
        </Field>
        <Field $w={156} $gap={6}>
          <FieldLabel>Anfang der Auswahl:</FieldLabel>
          <TimeCode />
        </Field>
        <Field $w={156} $gap={6}>
          <RadioRow>
            <Radio $on $gap={1} />
            Ende
            <Radio $gap={9} />
            Länge
          </RadioRow>
          <TimeCode />
        </Field>
        <Field $w={156} $gap={13}>
          <FieldLabel>Audioposition:</FieldLabel>
          <TimeCode />
        </Field>
      </SelectionBar>

      <Status>Gestoppt.</Status>
    </Window>
  );
}
